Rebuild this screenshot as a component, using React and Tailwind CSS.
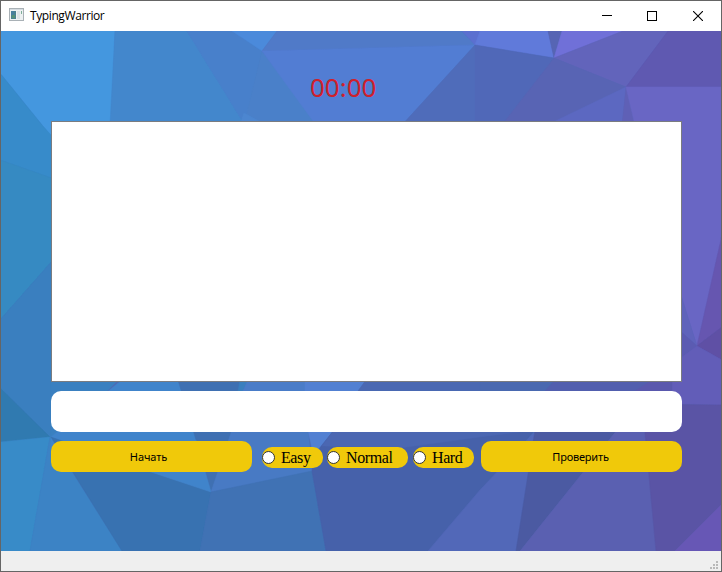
const FACETS = [
  ['0,31 115,31 110,150 51,136 0,73', '#4497df'],
  ['0,73 42,125 60,145 60,181 0,160', '#378bca'],
  ['0,160 60,181 60,252 0,320', '#368ac2'],
  ['0,320 60,252 60,448 50,437 0,388', '#3a7fbf'],
  ['0,388 50,437 0,442', '#307ab0'],
  ['0,442 50,437 30,551 0,551', '#388bc8'],
  ['50,437 122,551 30,551', '#3c83c5'],
  ['115,31 187,31 250,125 110,125', '#4387cc'],
  ['187,31 240,31 245,125', '#4a80cc'],
  ['187,31 232,31 262,51 245,125', '#4880cb'],
  ['232,31 277,31 262,51', '#4b8adb'],
  ['262,51 318,125 244,125', '#4a80c9'],
  ['244,113 266,125 240,125', '#4c86d0'],
  ['277,31 462,31 475,45 262,51', '#507ac8'],
  ['262,51 475,45 402,125 316,125', '#527dd3'],
  ['475,45 480,125 402,125', '#4f6cba'],
  ['462,31 482,31 475,45', '#5b70d0'],
  ['480,31 548,31 554,58 475,45', '#607ada'],
  ['475,45 554,58 505,125 475,125', '#5068b8'],
  ['548,31 562,31 554,58', '#5665b4'],
  ['562,31 623,31 554,58', '#7070d8'],
  ['623,31 668,31 626,87 554,58', '#6264bb'],
  ['668,31 722,31 722,87 626,87', '#5f59b1'],
  ['554,58 626,87 547,125 502,125', '#5864b4'],
  ['626,87 547,125 622,125', '#5c68c1'],
  ['626,87 622,125 635,125', '#5f60b6'],
  ['626,87 722,87 722,235 697,346 670,260 634,121', '#6966c4'],
  ['722,235 722,327 697,346', '#6656b0'],
  ['722,327 722,360 697,346', '#5f50a5'],
  ['670,260 697,346 670,322', '#5f63bb'],
  ['670,322 697,346 670,366', '#5b5bb2'],
  ['670,366 697,346 722,360 722,405 670,404', '#625db8'],
  ['51,380 118,380 107,391 51,440', '#3a80c0'],
  ['122,380 178,380 200,450 51,450 51,437', '#4084cb'],
  ['178,380 240,380 232,432 211,492 196,440', '#3f70b2'],
  ['240,380 248,380 243,391 238,391', '#3a7fbe'],
  ['248,380 305,380 305,391 243,391', '#4a7cc8'],
  ['305,380 366,380 358,391 305,391', '#5280d2'],
  ['366,380 480,380 480,391 358,391', '#4a68b2'],
  ['480,380 555,380 545,391 480,391', '#4a69b0'],
  ['555,380 652,380 635,391 545,391', '#525fae'],
  ['652,380 672,380 672,391 635,391', '#5a58ad'],
  ['51,437 145,470 211,492 200,551 122,551', '#3872b1'],
  ['145,470 196,440 211,492', '#4084cb'],
  ['232,430 308,430 312,472 211,492', '#487ac4'],
  ['211,492 312,471 326,551 200,551', '#4072b4'],
  ['308,430 334,430 314,458', '#5280d2'],
  ['334,430 480,430 535,430 430,551 326,551 312,471 314,455', '#4661aa'],
  ['334,430 535,430 480,437 400,448 322,446', '#4b67b2'],
  ['535,432 480,490 428,551 516,551', '#5268b8'],
  ['535,430 617,430 520,551 516,551', '#4b5aa2'],
  ['617,430 645,430 656,551 520,551', '#5a60b1'],
  ['645,404 722,405 722,504 675,551 656,551 645,433', '#5a54a5'],
  ['722,504 722,551 675,551', '#6757b5'],
];

function Backdrop() {
  return (
    <svg className="absolute inset-0 h-full w-full" viewBox="1 31 720 520" preserveAspectRatio="none" aria-hidden="true">
      <rect x="0" y="31" width="722" height="520" fill="#4a6cb6" />
      {FACETS.map(([points, color]) => (
        <polygon key={points} points={points} fill={color} stroke={color} strokeWidth="0.5" />
      ))}
    </svg>
  );
}

function AppIcon() {
  return (
    <svg width="16" height="14" viewBox="0 0 16 14" className="mb-0.5 ml-px shrink-0" shapeRendering="crispEdges">
      <rect x="0" y="0" width="15" height="13" fill="#a9b1b6" />
      <rect x="1" y="1" width="13" height="1" fill="#d5dce1" />
      <rect x="1" y="2" width="13" height="10" fill="#edf1f2" />
      <rect x="2" y="3" width="5" height="8" fill="#4b8190" />
      <rect x="2" y="3" width="3" height="4" fill="#477f9e" />
      <rect x="3" y="7" width="3" height="3" fill="#549177" />
      <rect x="8" y="3" width="3" height="8" fill="#dce2e5" />
      <rect x="12" y="3" width="1" height="3" fill="#7fae9a" />
    </svg>
  );
}

function TitleBar() {
  return (
    <header className="flex h-[30px] shrink-0 items-center bg-white pl-[7px]">
      <AppIcon />
      <h1 className="ml-[5px] font-['Open_Sans',sans-serif] text-[12px] leading-4 tracking-[-0.4px] text-black">TypingWarrior</h1>
      <div className="ml-auto flex h-full">
        <button className="flex w-[45px] items-center justify-center" aria-label="Minimize">
          <svg width="10" height="10" shapeRendering="crispEdges"><path d="M0 4.5h10" stroke="#000" /></svg>
        </button>
        <button className="flex w-[46px] items-center justify-center pb-px" aria-label="Maximize">
          <svg width="10" height="10" shapeRendering="crispEdges"><rect x=".5" y=".5" width="9" height="9" fill="none" stroke="#000" /></svg>
        </button>
        <button className="flex w-[46px] items-center justify-center pb-px" aria-label="Close">
          <svg width="10" height="10"><path d="M0 0L10 10M10 0L0 10" stroke="#000" strokeWidth="1.1" /></svg>
        </button>
      </div>
    </header>
  );
}

function ActionButton({ children, className }) {
  return (
    <button className={`h-[31px] w-[201px] shrink-0 rounded-[10px] bg-[#f0c90a] pt-[2px] font-['Noto_Sans',sans-serif] text-[11px] text-black ${className}`}>
      {children}
    </button>
  );
}

function Level({ label, className }) {
  return (
    <label className={`flex h-[21px] items-center rounded-[10px] bg-[#f0c90a] font-['Liberation_Serif',serif] text-[16px] leading-[21px] tracking-[-0.4px] text-black ${className}`}>
      <span className="h-[13px] w-[13px] shrink-0 rounded-full border border-[#333] bg-white" />
      <span className="ml-[6px]">{label}</span>
    </label>
  );
}

export default function App() {
  return (
    <div className="flex h-[572px] w-[722px] flex-col overflow-hidden border border-[#656565]">
      <TitleBar />
      <main className="relative flex h-[520px] shrink-0 flex-col">
        <Backdrop />
        <div className="relative flex flex-col px-[50px]">
          <div className="mt-[39px] h-[34px] pl-[259px] font-['Noto_Sans',sans-serif] text-[26px] leading-[34px] text-[#cf202b]">00:00</div>
          <div className="mt-[17px] h-[261px] w-[631px] border border-[#7a7c80] bg-white" />
          <div className="mt-[9px] h-[41px] w-[631px] rounded-[10px] bg-white" />
          <div className="mt-[9px] flex w-[631px] items-center">
            <ActionButton className="pr-[6px] tracking-[-0.1px]">Начать</ActionButton>
            <div className="mt-[2px] ml-[10px] flex gap-1">
              <Level label="Easy" className="w-[61px]" />
              <Level label="Normal" className="w-[81px]" />
              <Level label="Hard" className="ml-px w-[61px]" />
            </div>
            <div className="ml-auto flex"><ActionButton className="pr-[2px] tracking-[-0.2px]">Проверить</ActionButton></div>
          </div>
        </div>
      </main>
      <footer className="flex h-5 shrink-0 items-end justify-end bg-[#efefef] pr-[3px] pb-[2px]">
        <svg width="8" height="8" fill="#b9b9b9" shapeRendering="crispEdges">
          <path d="M6 0h2v2H6zM3 3h2v2H3zM6 3h2v2H6zM0 6h2v2H0zM3 6h2v2H3zM6 6h2v2H6z" />
        </svg>
      </footer>
    </div>
  );
}
